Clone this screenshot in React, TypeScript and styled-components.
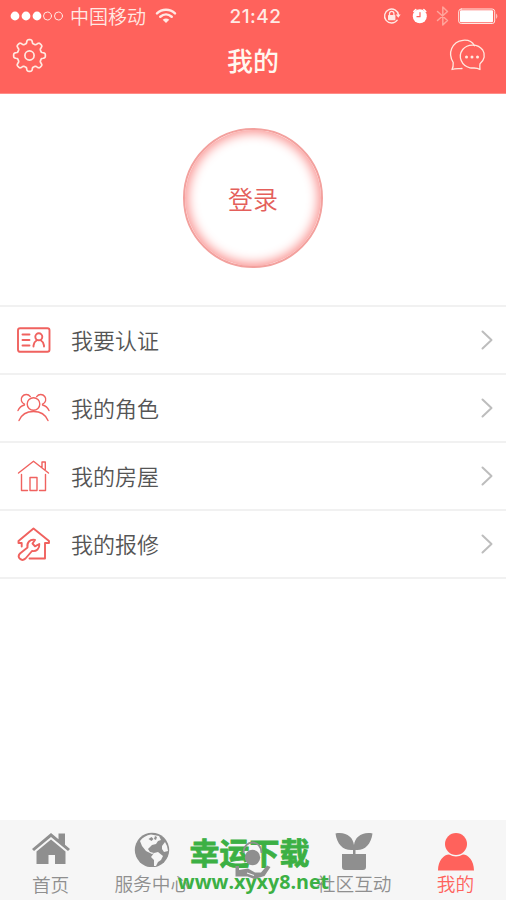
import React from "react";
import styled, { createGlobalStyle } from "styled-components";

const Global = createGlobalStyle`
  * { box-sizing: border-box; }
  body { margin: 0; background: #fff; font-family: "Noto Sans CJK SC", sans-serif; }
`;
const Screen = styled.div`
  width: 506px; height: 900px; display: flex; flex-direction: column;
  background: #fff; overflow: hidden;
`;
const Header = styled.header`
  height: 94px; background: #ff625c; color: #fff; border-bottom: 1px solid #ff8d88; flex: none;
`;
const StatusBar = styled.div`
  height: 32px; display: grid; grid-template-columns: 1fr 60px 1fr; align-items: center;
  padding: 0 8px 0 10px; color: #ffe9e4;
`;
const StatusGroup = styled.div<{ $end?: boolean }>`
  display: flex; align-items: center; justify-content: ${p => (p.$end ? "flex-end" : "flex-start")};
`;
const Carrier = styled.span`
  font-size: 19px; font-weight: 350; line-height: 30px; margin: 0 10px 0 6px; white-space: nowrap;
`;
const Clock = styled.time`
  font: 500 19px/30px Inter, sans-serif; text-align: center; letter-spacing: 0.5px; padding: 2px 0 0 3px;
`;
const NavBar = styled.div`
  height: 61px; display: grid; grid-template-columns: 40px 1fr 40px; padding: 0 17px 0 10px;
`;
const Title = styled.h1`
  margin: 8px 0 0 7px; text-align: center; font-size: 26px; font-weight: 500; line-height: 40px; color: #fff7ef;
`;
const NavButton = styled.button`
  border: 0; background: none; padding: 0; width: 40px; height: 46px; display: flex; align-items: center;
`;
const Profile = styled.section`
  height: 211px; flex: none; display: flex; justify-content: center; align-items: flex-start; padding-top: 34px;
`;
const Login = styled.button`
  width: 140px; height: 140px; border-radius: 50%; border: 2px solid #f3a19e; background: #fff;
  box-shadow: inset 0 0 11px 3px #fa9593; color: #e45f5b;
  font: 350 25px/36px "Noto Sans CJK SC", sans-serif; padding: 0;
`;
const Menu = styled.nav`
  flex: 1; display: flex; flex-direction: column; margin-top: -0.5px;
`;
const Row = styled.a`
  height: 68.2px; display: grid; grid-template-columns: 54px 1fr 12px; align-items: center;
  padding: 0 13px 0 17px; border-top: 2px solid #f1f1f1; color: #555;
  font-size: 22px; font-weight: 350; line-height: 32px;
  &:last-child { height: 70px; border-bottom: 2px solid #f1f1f1; }
`;
const RowLabel = styled.span`
  padding-bottom: 2px;
`;
const TabBar = styled.footer`
  position: relative; height: 80px; flex: none; background: #f6f6f6;
  display: grid; grid-template-columns: repeat(5, 1fr);
`;
const Tab = styled.a<{ $active?: boolean }>`
  display: flex; flex-direction: column; align-items: center; padding-top: 11px;
  color: ${p => (p.$active ? "#ff625c" : "#8f8f8f")};
`;
const TabLabel = styled.span<{ $drop?: number }>`
  font-size: 18.7px; font-weight: 350; line-height: 26px; white-space: nowrap; margin-top: ${p => p.$drop ?? -1}px;
`;
const Watermark = styled.div`
  position: absolute; left: 176px; top: 13px; width: 155px; color: #3cb044;
  display: flex; flex-direction: column; align-items: center; pointer-events: none;
`;
const MarkName = styled.div`
  font-size: 30px; font-weight: 700; line-height: 37px; margin-left: -8px; -webkit-text-stroke: 0.8px #3cb044;
`;
const MarkUrl = styled.div`
  font: 700 19.7px/22px "Open Sans", sans-serif; white-space: nowrap; padding-top: 1px;
`;
const Line = styled.svg`
  display: block; fill: none; stroke: currentColor; stroke-linecap: round; stroke-linejoin: round; overflow: visible;
`;
const Red = styled(Line)`color: #f0625f;`;
const Pale = styled(Line)`color: #ffe9e0;`;
const Solid = styled.svg`display: block; fill: currentColor; position: relative; z-index: 1; flex: none;`;

const gear = (() => {
  const pts: string[] = [];
  for (let i = 0; i <= 160; i++) {
    const a = (i / 160) * Math.PI * 2;
    const r = 14 + 1.9 * Math.tanh(2.2 * Math.cos(8 * a));
    pts.push(`${(17.5 + r * Math.sin(a)).toFixed(2)} ${(17.5 - r * Math.cos(a)).toFixed(2)}`);
  }
  return `M${pts.join("L")}Z`;
})();

const Signal = () => (
  <Line width="54" height="12" viewBox="0 0 54 12" strokeWidth="1">
    {[5, 16, 27].map(x => <circle key={x} cx={x} cy="6" r="4.4" fill="#fff" stroke="none" />)}
    {[37.5, 48.5].map(x => <circle key={x} cx={x} cy="6" r="4" />)}
  </Line>
);
const Wifi = () => (
  <Line width="20" height="16" viewBox="0 0 20 16" strokeWidth="2.5" strokeLinecap="butt">
    <path d="M1 5.3C6 .4 14 .4 19 5.3M4.3 8.8C7.7 5.8 12.3 5.8 15.7 8.8" />
    <path d="M10 15 6.7 11.8Q10 9.3 13.3 11.8Z" fill="currentColor" stroke="none" />
  </Line>
);
const StatusIcons = () => (
  <Line width="115" height="24" viewBox="383 4 115 24" strokeWidth="1.4">
    <path d="M397.2 20.2A7 7 0 1 1 398.5 15" />
    <path d="M395.7 14.5h5l-2.4 3.2Z" fill="currentColor" stroke="none" />
    <rect x="388" y="15" width="7.4" height="5.3" rx=".7" fill="currentColor" stroke="none" />
    <path d="M389.5 15v-1.5a2.2 2.2 0 0 1 4.4 0V15" strokeWidth="1.3" />
    <circle cx="419.8" cy="16.2" r="7" fill="#fff" stroke="none" />
    <path d="m413.800 11.500 2-2M425.800 11.500l-2-2" stroke="#fff" strokeWidth="1.500" />
    <path d="M420 12.500v4.200h-3" stroke="#ff625c" strokeWidth="1.200" />
    <path d="m437.500 11.500 10 9-4.700 4.500V7l4.700 4.500-10 9" stroke="#ffa49b" strokeWidth="1.500" />
    <rect x="458.700" y="9" width="36" height="14.500" rx="2.500" strokeWidth="1" />
    <rect x="460" y="10.300" width="33" height="12" rx="1" fill="#fff" stroke="none" />
    <path d="M496.300 13.500q2 2.700 0 5.400Z" fill="currentColor" stroke="none" />
  </Line>
);
const Settings = () => (
  <Pale width="35" height="35" viewBox="0 0 35 35" strokeWidth="1.700">
    <path d={gear} transform="translate(2 0)" /><circle cx="19.500" cy="17.500" r="4.600" />
  </Pale>
);
const Chat = () => (
  <Pale width="36" height="34" viewBox="449 38 36 34" strokeWidth="1.300">
    <path d="M462 68.500C458.500 69 455.500 68.200 452 69.500Q453.500 67 453.200 62.500C450.500 58 449.500 53.500 451.700 48.500C456 38.500 470 37.500 474.500 45.800" />
    <path d="M480 69.500Q479.500 66 480 63.800C484.500 60 485.700 54.500 482.700 50C478 43.500 467.500 43.500 462.700 49.500C457.500 56.500 461.500 66 470 67.800C474 68.500 476 67 480 69.500Z" />
    {[466.500, 472, 477.500].map(x => <circle key={x} cx={x} cy="57" r="1.500" fill="currentColor" stroke="none" />)}
  </Pale>
);
const IdCard = () => (
  <Red width="34" height="34" viewBox="0 0 34 34" strokeWidth="1.900">
    <rect x="1" y="5.300" width="31.500" height="23.500" rx="2" />
    <path d="M5.500 11.500h7M5.500 17h7M5.500 22.500h7M16.500 23.500v-1q.5-3.500 3.300-5.200M27 23.500v-1q-.5-3.500-3.300-5.200" />
    <circle cx="21.800" cy="13.800" r="3.500" />
  </Red>
);
const People = () => (
  <Red width="34" height="34" viewBox="0 0 34 34" strokeWidth="1.400">
    <circle cx="16.500" cy="13" r="6.300" />
    <path d="M2 29.500C7 17.500 26 17.500 31 29.500M7.500 13.200A5 5 0 1 1 13.300 5.600M19.700 5.600A5 5 0 1 1 25.500 13.200M7.500 14Q3 15 1 19.500M25.500 14Q30 15 32 19.500" />
  </Red>
);
const House = () => (
  <Red width="34" height="34" viewBox="0 0 34 34" strokeWidth="1.400">
    <path d="M1.500 14 16.500 2.300 31.500 14M25 8V3h3.300v7.500M4.500 15.500v16h6M28.500 15.500v16h-6M13 31.500V18.500h7v13ZM17.500 31.500h2" />
  </Red>
);
const Repair = () => (
  <Red width="34" height="34" viewBox="0 0 34 34" strokeWidth="1.900">
    <path d="M4.700 19.500V16H1.500V14L16.500 1.500 32 14v2h-4v15.500H12.500" />
    <path d="M3 26.500 10.500 20.500C9.500 15.500 13 12 18 13L15.500 16.500l2.500 2.800 4.300-2.300C22.800 21.500 19.500 24.700 15 24L8.500 31.500C4.500 35 -.5 30.500 3 26.500Z" />
  </Red>
);
const Chevron = () => (
  <Line width="12" height="20" viewBox="0 0 12 20" strokeWidth="2" color="#bdbdbd"><path d="m1.500 1.500 9 8.500-9 8.500" /></Line>
);
const HomeIcon = () => (
  <Solid width="40" height="36" viewBox="0 0 40 36">
    <path d="M1 18 20 2l7.500 6.300V2.500H34v11.300L39 18l-2 2L20 6 3 20Z" />
    <path d="M5.500 20.500 20 8.600l14.500 11.900V33H24v-9h-6.500v9h-12Z" />
  </Solid>
);
const Globe = () => (
  <Solid width="36" height="36" viewBox="0 0 36 36">
    <circle cx="18" cy="19" r="17.200" />
    <path fill="#f6f6f6" d="M6 10Q10 4.500 17 3.500l8 1.500 2 4-3 1-2 3-4 1-4 4 2 3 4 1-2 1-6-3-4-5-2-5ZM20 22l4-1 5 4-2 4-3 2-2 4-2 0 0-6-3-3ZM28 15l3-4 2 4 1 5-4 1-2-3Z" />
    <path d="m14.500 8 3-2 2 2-2 2ZM21 5l2 1-1 3-2-1Z" />
  </Solid>
);
const Care = () => (
  <Solid width="40" height="52" viewBox="0 0 40 52">
    <path fill="none" stroke="currentColor" strokeWidth="1.800" d="M10.500 22C10.500 8 28.500 8 28.500 22" />
    <circle cx="19.500" cy="26.500" r="7.700" />
    <path d="M2.500 35h3.500v4l9-1.500 7 4 6 0 6-7 3.500 1.500-6 9-10 3-7-2.500-12 0Z" />
    <path fill="none" stroke="#f6f6f6" strokeWidth="1.200" d="m14 42 7 2.500" />
  </Solid>
);
const Plant = () => (
  <Solid width="38" height="40" viewBox="0 0 38 40">
    <path d="M.5 2.500C11 .5 18 6 19 14C20 6 27 .5 37.500 2.500C36 14 29 20 20.500 19v4H31V36q0 3-3 3H10q-3 0-3-3V23H18v-4C9 20 2 14 .5 2.500Z" />
  </Solid>
);
const Person = () => (
  <Solid width="38" height="40" viewBox="0 0 38 40">
    <circle cx="20" cy="13" r="11" /><path d="M2 39.500C2 29.500 8 23.500 13 23.500q7 4 14 0c5 0 11 6 11 16Z" />
  </Solid>
);

const rows = [
  { label: "我要认证", Icon: IdCard }, { label: "我的角色", Icon: People },
  { label: "我的房屋", Icon: House }, { label: "我的报修", Icon: Repair },
];

export default function App() {
  return (
    <Screen>
      <Global />
      <Header>
        <StatusBar>
          <StatusGroup><Signal /><Carrier>中国移动</Carrier><Wifi /></StatusGroup>
          <Clock>21:42</Clock>
          <StatusGroup $end><StatusIcons /></StatusGroup>
        </StatusBar>
        <NavBar>
          <NavButton aria-label="设置"><Settings /></NavButton>
          <Title>我的</Title>
          <NavButton aria-label="消息"><Chat /></NavButton>
        </NavBar>
      </Header>
      <Profile><Login>登录</Login></Profile>
      <Menu>
        {rows.map(({ label, Icon }) => <Row key={label}><Icon /><RowLabel>{label}</RowLabel><Chevron /></Row>)}
      </Menu>
      <TabBar>
        <Watermark><MarkName>幸运下载</MarkName><MarkUrl>www.xyxy8.net</MarkUrl></Watermark>
        <Tab><HomeIcon /><TabLabel $drop={4}>首页</TabLabel></Tab>
        <Tab><Globe /><TabLabel $drop={3}>服务中心</TabLabel></Tab>
        <Tab><Care /></Tab>
        <Tab><Plant /><TabLabel>社区互动</TabLabel></Tab>
        <Tab $active><Person /><TabLabel>我的</TabLabel></Tab>
      </TabBar>
    </Screen>
  );
}
